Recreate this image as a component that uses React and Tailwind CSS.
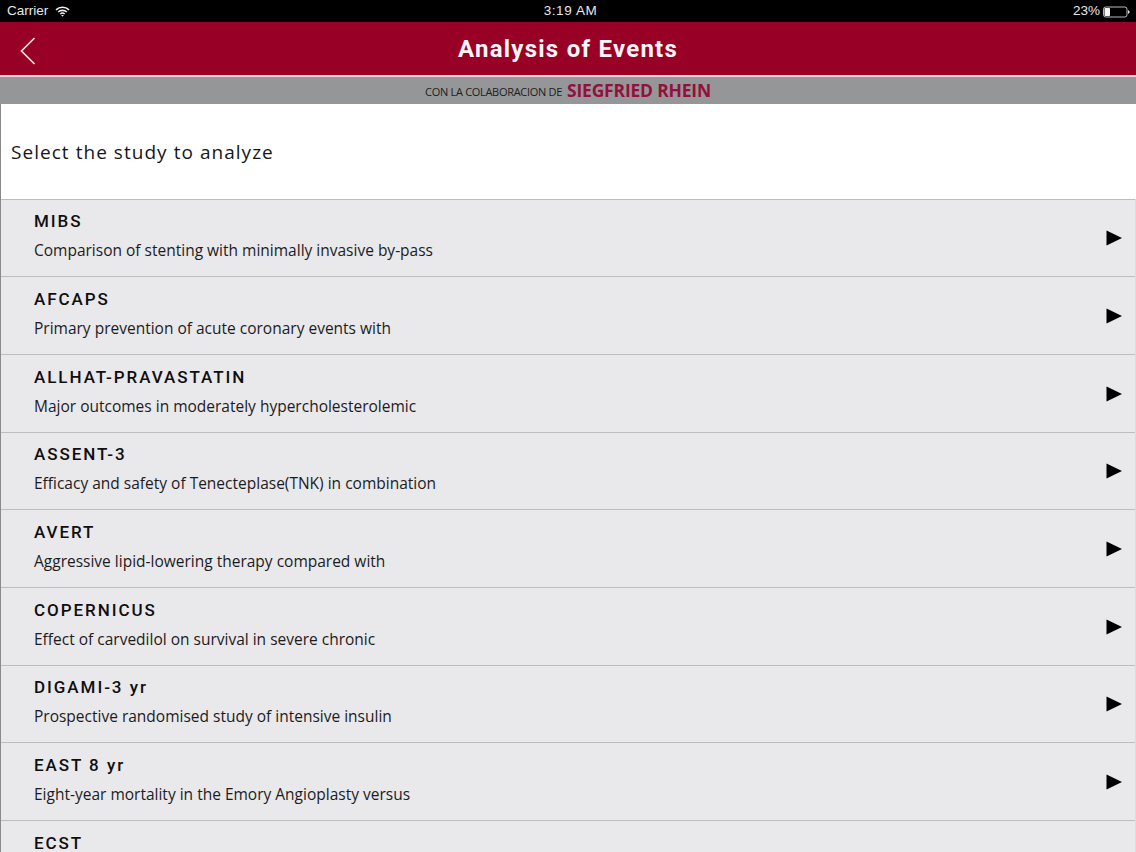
import React from "react";

const studies = [
  { name: "MIBS", desc: "Comparison of stenting with minimally invasive by-pass" },
  { name: "AFCAPS", desc: "Primary prevention of acute coronary events with" },
  { name: "ALLHAT-PRAVASTATIN", desc: "Major outcomes in moderately hypercholesterolemic" },
  { name: "ASSENT-3", desc: "Efficacy and safety of Tenecteplase(TNK) in combination" },
  { name: "AVERT", desc: "Aggressive lipid-lowering therapy compared with" },
  { name: "COPERNICUS", desc: "Effect of carvedilol on survival in severe chronic" },
  { name: "DIGAMI-3 yr", desc: "Prospective randomised study of intensive insulin" },
  { name: "EAST 8 yr", desc: "Eight-year mortality in the Emory Angioplasty versus" },
  { name: "ECST", desc: "" },
];

function Wifi() {
  return (
    <svg width="15" height="11" viewBox="0 0 15 11" fill="none" stroke="#f2f2f2" strokeWidth="1.6">
      <path d="M1 3.8C4.6 0.4 10.4 0.4 14 3.8" />
      <path d="M3.2 6C5.6 3.8 9.4 3.8 11.8 6" />
      <path d="M5.3 8C6.5 6.9 8.5 6.9 9.7 8" />
      <path d="M7.5 10.8L6.2 9.3C6.9 8.8 8.1 8.8 8.8 9.3Z" fill="#f2f2f2" stroke="none" />
    </svg>
  );
}

function Battery() {
  return (
    <svg width="27" height="12" viewBox="0 0 27 12" fill="none">
      <rect x="0.5" y="1" width="23.5" height="10" rx="2.2" stroke="#e8e8e8" strokeWidth="0.8" />
      <rect x="1.5" y="2" width="5.5" height="8" rx="0.8" fill="#f5f5f5" />
      <path d="M25 4.2C26.2 4.5 26.6 5.2 26.6 6C26.6 6.8 26.2 7.5 25 7.8Z" fill="#e8e8e8" />
    </svg>
  );
}

function StudyRow({ name, desc }) {
  return (
    <div className="h-[77.7px] shrink-0 flex items-center justify-between bg-[#e9e8ea] border-t border-[#bdbdbf] pl-[33px] pr-[13px]">
      <div className="flex flex-col pb-[4px]">
        <span className="font-['Roboto',sans-serif] font-medium text-[17px] leading-[22px] tracking-[1.95px] whitespace-pre text-[#0f0f11]">{name}</span>
        <span className="mt-[7px] h-[22px] font-['Open_Sans',sans-serif] text-[15.5px] leading-[22px] text-[#1c1c1e]">{desc}</span>
      </div>
      <svg width="16" height="16" viewBox="0 0 16 16" className="shrink-0 mt-[1px]">
        <path d="M0.5 0.5L16 8L0.5 15.5Z" fill="#000" />
      </svg>
    </div>
  );
}

export default function App() {
  return (
    <div className="h-[852px] w-[1136px] overflow-hidden flex flex-col bg-white">
      <div className="relative h-[22px] shrink-0 bg-black flex items-center justify-between pl-[7px] pr-[6px] pt-[1px] font-['Liberation_Sans',sans-serif] text-[13.5px] text-[#e8e8e8]">
        <div className="flex items-center gap-[7px]">
          <span>Carrier</span>
          <Wifi />
        </div>
        <span className="absolute left-0 right-0 pl-[5px] text-center tracking-[0.6px]">3:19 AM</span>
        <div className="flex items-center gap-[3px]">
          <span>23%</span>
          <Battery />
        </div>
      </div>

      <div className="relative h-[53px] shrink-0 bg-[#990026] flex items-center justify-center">
        <svg width="16" height="28" viewBox="0 0 16 28" fill="none" stroke="#f7dfe4" strokeWidth="1.7" className="absolute left-[20px] top-[15px]">
          <path d="M14.5 1L1.5 14L14.5 27" />
        </svg>
        <h1 className="font-['Roboto',sans-serif] font-bold text-[24px] tracking-[1.25px] text-[#f9f5f6]">Analysis of Events</h1>
      </div>

      <div className="h-[2px] shrink-0 bg-[#f0d4da]" />

      <div className="h-[27px] shrink-0 bg-[#959698] flex items-center justify-center gap-[5px]">
        <span className="mt-[3px] font-['Open_Sans',sans-serif] text-[11px] tracking-[-0.3px] text-[#1d1d22]">CON LA COLABORACION DE</span>
        <span className="font-['Open_Sans',sans-serif] font-bold text-[17.5px] tracking-[-0.2px] text-[#960f3c]">SIEGFRIED RHEIN</span>
      </div>

      <div className="h-[94.5px] shrink-0 bg-white border-l border-[#8a8a8a] pl-[10px] pt-[35px]">
        <p className="font-['Open_Sans',sans-serif] text-[19px] leading-[27px] tracking-[1.04px] text-[#161618]">Select the study to analyze</p>
      </div>

      <div className="flex flex-col border-l border-[#8a8a8a] border-r border-r-[#dddde0]">
        {studies.map((s) => (
          <StudyRow key={s.name} name={s.name} desc={s.desc} />
        ))}
      </div>
    </div>
  );
}
